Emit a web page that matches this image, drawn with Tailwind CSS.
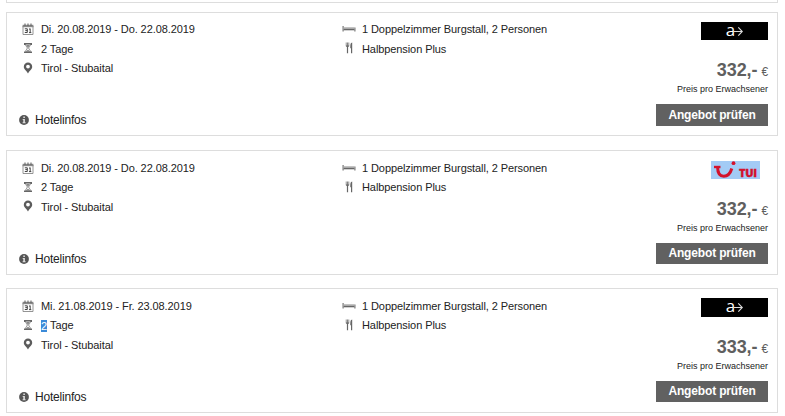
<!DOCTYPE html>
<html lang="de">
<head>
  <meta charset="UTF-8">
  <meta name="viewport" content="width=device-width, initial-scale=1.0">
  <title>Angebote</title>
  <script src="https://cdn.jsdelivr.net/npm/@tailwindcss/browser@4"></script>
</head>
<body class="h-[416px] overflow-hidden bg-white font-['Liberation_Sans',Arial,sans-serif] text-[11px] tracking-[-0.09px] text-[#222]">

  <!-- Icons -->
  <svg class="hidden">
    <symbol id="kalender" viewBox="0 0 12 12">
      <path d="M1 3h10v8.500H1z" fill="#fff" stroke="#888" stroke-width=".9"/>
      <path d="M.6 1.800h10.800v2.400H.6z" fill="#888"/>
      <path d="M3 .5v2.600M6 .5v2.600M9 .5v2.600" stroke="#666" stroke-width="1.100"/>
      <path d="M2.800 5.800h2.500v3.700H2.800M3.300 7.600h2M7 6.300l1.200-.6v4M7 9.600h2.300" fill="none" stroke="#444" stroke-width="1"/>
    </symbol>
    <symbol id="sanduhr" viewBox="0 0 10 12">
      <path d="M1 1h8v2H1zM1 9.500h8V11H1z" fill="#666"/>
      <path d="M2.700 2.500C2.700 4.500 4.300 5 4.300 6S2.700 7.800 2.700 9.600h4.600C7.300 7.800 5.700 7 5.700 6s1.600-1.500 1.600-3.500" fill="#fff" stroke="#777" stroke-width=".9"/>
      <path d="M3 2.700h4L5 6zM5 7.500l1.800 2H3.200z" fill="#888"/>
    </symbol>
    <symbol id="ort" viewBox="0 0 10 12">
      <path fill-rule="evenodd" d="M5 .5a4.200 4.200 0 0 0-4.200 4.200C.8 7.200 3.500 8.500 5 11.500 6.500 8.500 9.200 7.200 9.200 4.700A4.200 4.200 0 0 0 5 .5zm0 2.200a1.900 1.900 0 1 1 0 3.800 1.900 1.900 0 0 1 0-3.800z" fill="#5c5c5c"/>
    </symbol>
    <symbol id="bett" viewBox="0 0 14 8">
      <path d="M.5 1h1.200v5.500H.5zM12.300 2.500h1.200v4h-1.200z" fill="#777"/>
      <path d="M1.700 2.300h10.600v1.700H1.700z" fill="#aaa"/>
      <path d="M1.700 4h10.600v1.300H1.700z" fill="#666"/>
    </symbol>
    <symbol id="besteck" viewBox="0 0 8 12">
      <path d="M.8.5v3.200c0 .8.500 1 1.100 1.200v6.300h1.200V4.900c.6-.2 1.100-.4 1.100-1.200V.5h-.7v3h-.6v-3h-.8v3h-.6v-3z" fill="#666"/>
      <path d="M7.200.5C5.700.7 5.300 2 5.300 6.200h.7v5h1.200z" fill="#666"/>
    </symbol>
    <symbol id="info" viewBox="0 0 10 10">
      <circle cx="5" cy="5" r="4.900" fill="#555"/>
      <path d="M4.300 1.600h1.600v1.300H4.300zM3.700 3.900h2.200v3.300h.7v1H3.600v-1h.7V4.900h-.6z" fill="#ddd"/>
    </symbol>
    <symbol id="pfeil" viewBox="0 0 9 11">
      <path d="M0 5.500h8M4.300 1.300l4 4.200-4 4.200" fill="none" stroke="#ddd" stroke-width="1.100"/>
    </symbol>
    <symbol id="tui" viewBox="0 0 24 18">
      <path d="M1 6h6.500" fill="none" stroke="#d3122c" stroke-width="2.400"/>
      <path d="M4.600 6c0 6 2.200 9.200 6.200 9.200 4 0 6.500-2.700 8-7.700" fill="none" stroke="#d3122c" stroke-width="3"/>
      <circle cx="20.500" cy="2.200" r="1.900" fill="#d3122c"/>
    </symbol>
  </svg>

  <main class="ml-[6px] w-[772px]">
    <div class="h-[3px] border-x border-b border-[#ddd]"></div>

    <!-- Angebot 1 -->
    <article class="mt-[9px] flex h-[124px] border border-[#ddd] pt-[7px]">
      <div class="flex w-[335px] flex-col pl-[12px]">
        <div class="flex h-[19px] items-center"><svg class="mr-[7px] mb-[2px] ml-[3px] h-3 w-3"><use href="#kalender"/></svg>Di. 20.08.2019 - Do. 22.08.2019</div>
        <div class="flex h-5 items-center"><svg class="mr-2 mb-[2px] ml-1 h-3 w-[10px]"><use href="#sanduhr"/></svg>2 Tage</div>
        <div class="flex h-[19px] items-center"><svg class="mr-2 mb-[2px] ml-1 h-3 w-[10px]"><use href="#ort"/></svg>Tirol - Stubaital</div>
        <div class="mt-auto mb-[6px] flex h-[18px] items-center text-xs tracking-[-0.2px]"><svg class="mr-[6px] h-[10px] w-[10px]"><use href="#info"/></svg>Hotelinfos</div>
      </div>
      <div class="flex-1">
        <div class="flex h-[19px] items-center"><svg class="mr-[6px] mb-[2px] h-2 w-[14px]"><use href="#bett"/></svg>1 Doppelzimmer Burgstall, 2 Personen</div>
        <div class="flex h-5 items-center"><svg class="mr-[9px] mb-[2px] ml-[3px] h-3 w-2"><use href="#besteck"/></svg>Halbpension Plus</div>
      </div>
      <div class="flex w-[121px] flex-col items-end pt-[2px] pr-[9px]">
        <div class="flex h-[18px] w-[67px] items-center justify-center bg-black font-['Open_Sans',sans-serif] text-[17px] leading-none text-white"><span class="-mt-1">a</span><svg class="-ml-px h-[11px] w-[9px]"><use href="#pfeil"/></svg></div>
        <div class="mt-[20px] flex h-5 items-baseline text-[18px] leading-5 font-bold text-[#5f5f5f]">332,-<span class="ml-1 text-xs font-normal">€</span></div>
        <div class="mt-[3px] h-[12px] text-[9px] leading-[12px] tracking-normal">Preis pro Erwachsener</div>
        <button class="mt-[9px] h-[22px] w-[112px] bg-[#616161] pb-px text-xs font-bold tracking-[-0.15px] text-white">Angebot prüfen</button>
      </div>
    </article>

    <!-- Angebot 2 -->
    <article class="mt-[14px] flex h-[125px] border border-[#ddd] pt-[8px]">
      <div class="flex w-[335px] flex-col pl-[12px]">
        <div class="flex h-[19px] items-center"><svg class="mr-[7px] mb-[2px] ml-[3px] h-3 w-3"><use href="#kalender"/></svg>Di. 20.08.2019 - Do. 22.08.2019</div>
        <div class="flex h-[19px] items-center"><svg class="mr-2 mb-[2px] ml-1 h-3 w-[10px]"><use href="#sanduhr"/></svg>2 Tage</div>
        <div class="flex h-5 items-center"><svg class="mr-2 mb-[2px] ml-1 h-3 w-[10px]"><use href="#ort"/></svg>Tirol - Stubaital</div>
        <div class="mt-auto mb-[6px] flex h-[18px] items-center text-xs tracking-[-0.2px]"><svg class="mr-[6px] h-[10px] w-[10px]"><use href="#info"/></svg>Hotelinfos</div>
      </div>
      <div class="flex-1">
        <div class="flex h-[19px] items-center"><svg class="mr-[6px] mb-[2px] h-2 w-[14px]"><use href="#bett"/></svg>1 Doppelzimmer Burgstall, 2 Personen</div>
        <div class="flex h-[19px] items-center"><svg class="mr-[9px] mb-[2px] ml-[3px] h-3 w-2"><use href="#besteck"/></svg>Halbpension Plus</div>
      </div>
      <div class="flex w-[121px] flex-col items-end pt-[2px] pr-[9px]">
        <div class="mr-2 flex h-[18px] w-[49px] items-end bg-[#a3cbf5] pl-[2px] text-[#d3122c]"><svg class="h-[18px] w-6"><use href="#tui"/></svg><span class="ml-[2px] font-['Open_Sans',sans-serif] text-[11px] leading-[13px] font-extrabold tracking-[-0.3px] [-webkit-text-stroke:0.3px_#d3122c]">TUI</span></div>
        <div class="mt-[20px] flex h-5 items-baseline text-[18px] leading-5 font-bold text-[#5f5f5f]">332,-<span class="ml-1 text-xs font-normal">€</span></div>
        <div class="mt-[3px] h-[12px] text-[9px] leading-[12px] tracking-normal">Preis pro Erwachsener</div>
        <button class="mt-[9px] h-[21px] w-[112px] bg-[#616161] pb-px text-xs font-bold tracking-[-0.15px] text-white">Angebot prüfen</button>
      </div>
    </article>

    <!-- Angebot 3 -->
    <article class="mt-[13px] flex h-[125px] border border-[#ddd] pt-[8px]">
      <div class="flex w-[335px] flex-col pl-[12px]">
        <div class="flex h-[19px] items-center"><svg class="mr-[7px] mb-[2px] ml-[3px] h-3 w-3"><use href="#kalender"/></svg>Mi. 21.08.2019 - Fr. 23.08.2019</div>
        <div class="flex h-[19px] items-center"><svg class="mr-2 mb-[2px] ml-1 h-3 w-[10px]"><use href="#sanduhr"/></svg><span class="mr-[3px] bg-[#3b8ad8] leading-[12px] text-white">2</span>Tage</div>
        <div class="flex h-5 items-center"><svg class="mr-2 mb-[2px] ml-1 h-3 w-[10px]"><use href="#ort"/></svg>Tirol - Stubaital</div>
        <div class="mt-auto mb-[6px] flex h-[18px] items-center text-xs tracking-[-0.2px]"><svg class="mr-[6px] h-[10px] w-[10px]"><use href="#info"/></svg>Hotelinfos</div>
      </div>
      <div class="flex-1">
        <div class="flex h-[19px] items-center"><svg class="mr-[6px] mb-[2px] h-2 w-[14px]"><use href="#bett"/></svg>1 Doppelzimmer Burgstall, 2 Personen</div>
        <div class="flex h-[19px] items-center"><svg class="mr-[9px] mb-[2px] ml-[3px] h-3 w-2"><use href="#besteck"/></svg>Halbpension Plus</div>
      </div>
      <div class="flex w-[121px] flex-col items-end pt-px pr-[9px]">
        <div class="flex h-[19px] w-[67px] items-center justify-center bg-black font-['Open_Sans',sans-serif] text-[17px] leading-none text-white"><span class="-mt-1">a</span><svg class="-ml-px h-[11px] w-[9px]"><use href="#pfeil"/></svg></div>
        <div class="mt-[20px] flex h-5 items-baseline text-[18px] leading-5 font-bold text-[#5f5f5f]">333,-<span class="ml-1 text-xs font-normal">€</span></div>
        <div class="mt-[3px] h-[12px] text-[9px] leading-[12px] tracking-normal">Preis pro Erwachsener</div>
        <button class="mt-[9px] h-[21px] w-[112px] bg-[#616161] pb-px text-xs font-bold tracking-[-0.15px] text-white">Angebot prüfen</button>
      </div>
    </article>
  </main>

</body>
</html>
